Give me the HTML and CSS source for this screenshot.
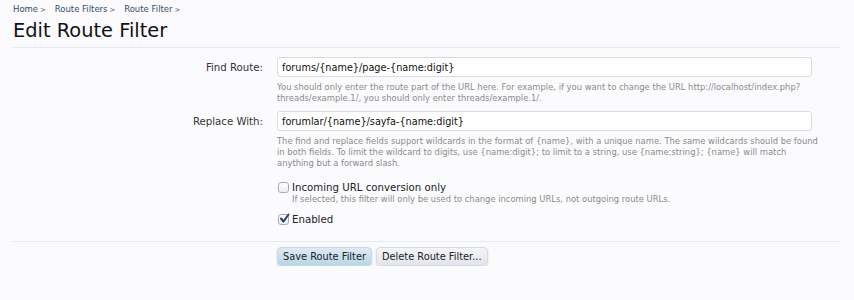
FILE: index.html
```html
<!DOCTYPE html>
<html lang="en">
<head>
    <meta charset="UTF-8">
    <title>Edit Route Filter</title>
    <link rel="stylesheet" href="styles.css">
</head>
<body>

<div class="page">
    <div class="breadcrumb">
        <a href="#">Home</a><span class="arrow">&gt;</span>
        <a href="#">Route Filters</a><span class="arrow">&gt;</span>
        <a href="#">Route Filter</a><span class="arrow">&gt;</span>
    </div>
    <h1 class="title">Edit Route Filter</h1>

    <form class="edit-form">
        <div class="row">
            <label class="label" for="find">Find Route:</label>
            <div class="control">
                <input type="text" id="find" class="text-input" value="forums/{name}/page-{name:digit}">
                <p class="explain">You should only enter the route part of the URL here. For example, if you want to change the URL http://localhost/index.php?<br>threads/example.1/, you should only enter threads/example.1/.</p>
            </div>
        </div>

        <div class="row">
            <label class="label" for="replace">Replace With:</label>
            <div class="control">
                <input type="text" id="replace" class="text-input" value="forumlar/{name}/sayfa-{name:digit}">
                <p class="explain">The find and replace fields support wildcards in the format of {name}, with a unique name. The same wildcards should be found<br>in both fields. To limit the wildcard to digits, use {name:digit}; to limit to a string, use {name:string}; {name} will match<br>anything but a forward slash.</p>
            </div>
        </div>

        <div class="row checks">
            <div class="label"></div>
            <div class="control">
                <label class="check"><span class="box"></span> Incoming URL conversion only</label>
                <p class="explain indent">If selected, this filter will only be used to change incoming URLs, not outgoing route URLs.</p>
                <label class="check"><span class="box checked"><svg width="11" height="11" viewBox="0 0 11 11"><path d="M2 5.5 L4.5 8.5 L9.5 1.5" fill="none" stroke="#1f3f78" stroke-width="2" stroke-linecap="round" stroke-linejoin="round"/></svg></span> Enabled</label>
            </div>
        </div>

        <div class="row submit">
            <div class="label"></div>
            <div class="control buttons">
                <button type="button" class="btn primary">Save Route Filter</button>
                <button type="button" class="btn">Delete Route Filter...</button>
            </div>
        </div>
    </form>
</div>

</body>
</html>
```

FILE: styles.css
```css
body {
    margin: 0;
    background: #fbfbfe;
    font-family: "DejaVu Sans", Verdana, sans-serif;
    color: #222;
}
.page {
    padding: 3px 13px 0 13px;
}
.breadcrumb {
    font-size: 8.5px;
    height: 13px;
    line-height: 13px;
}
.breadcrumb a {
    color: #2f4d70;
    text-decoration: none;
}
.breadcrumb .arrow {
    color: #555;
    font-size: 7px;
    margin: 0 6px 0 2px;
}
.title {
    font-size: 19.4px;
    font-weight: normal;
    color: #111;
    margin: 2px 0 0 0;
    line-height: 25px;
    padding-bottom: 4px;
    border-bottom: 1px solid #e6eaef;
}
.edit-form {
    padding-top: 9px;
}
.row {
    display: grid;
    grid-template-columns: 250px 535px;
    column-gap: 14px;
}
.label {
    text-align: right;
    font-size: 10.2px;
    color: #333;
    padding-top: 5px;
}
.text-input {
    display: block;
    box-sizing: border-box;
    width: 535px;
    height: 20px;
    border: 1px solid #d8dbe0;
    border-radius: 3px;
    background: #fff;
    font-family: "DejaVu Sans", Verdana, sans-serif;
    font-size: 9.7px;
    color: #111;
    padding: 1px 4px 0 4px;
    margin: 0;
}
.explain {
    font-size: 8.4px;
    line-height: 11px;
    color: #8a8a8a;
    margin: 5px 0 7px 0;
    white-space: nowrap;
}
.checks .control {
    padding-top: 4px;
}
.check {
    display: flex;
    align-items: center;
    font-size: 10.2px;
    color: #222;
    height: 14px;
}
.box {
    position: relative;
    box-sizing: border-box;
    width: 11px;
    height: 11px;
    margin: 0 3px 0 1px;
    border: 1px solid #a9adb3;
    border-radius: 3px;
    background: linear-gradient(#ffffff, #ececf0);
}
.box svg {
    position: absolute;
    left: 0;
    top: -2px;
}
.explain.indent {
    margin: 0 0 7px 15px;
}
.submit {
    border-top: 1px solid #e6eaef;
    margin-top: 15px;
    padding-top: 5px;
}
.buttons {
    display: flex;
    gap: 4px;
}
.btn {
    font-family: "DejaVu Sans", Verdana, sans-serif;
    font-size: 9.8px;
    color: #222;
    height: 19px;
    padding: 0 5px;
    border: 1px solid #d6dbe2;
    border-radius: 4px;
    background: linear-gradient(#f4f5f8, #e2e5ec);
    box-shadow: 0 1px 2px rgba(0, 0, 0, 0.15);
    cursor: pointer;
}
.btn.primary {
    background: linear-gradient(#dcebf4, #b9d6e7);
    border-color: #c3d9e6;
}
```
